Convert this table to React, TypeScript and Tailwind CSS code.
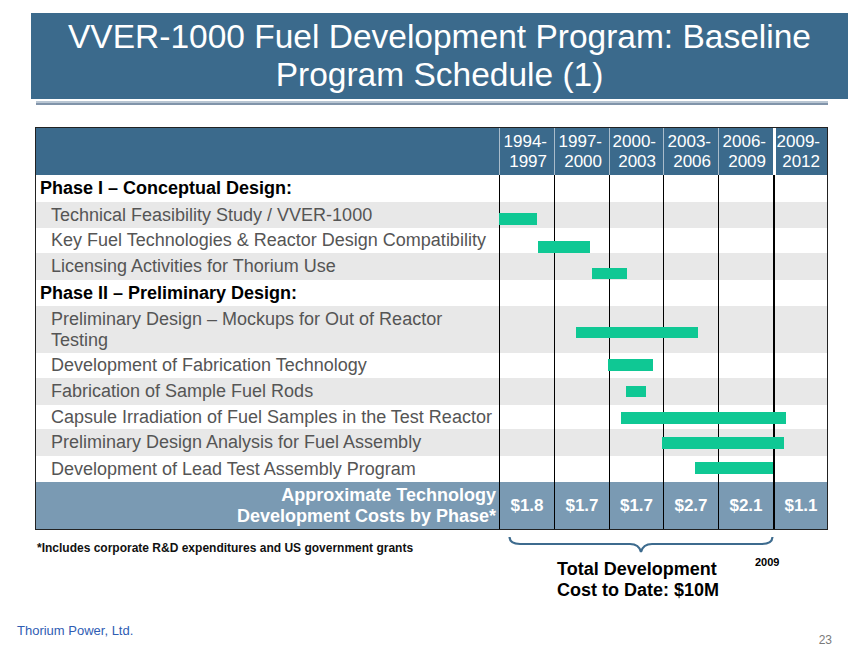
import React from 'react';

type Row = {
  label: string;
  h: number;
  phase?: boolean;
  gray?: boolean;
  bar?: [number, number, number, number]; // x1, x2 (page px), top in row, height
};

// timeline starts at x=499 on the page
const T0 = 499;

const rows: Row[] = [
  { label: 'Phase I – Conceptual Design:', h: 27, phase: true },
  { label: 'Technical Feasibility Study / VVER-1000', h: 26, gray: true, bar: [499, 537, 11, 12] },
  { label: 'Key Fuel Technologies & Reactor Design Compatibility', h: 25, bar: [538, 590, 13, 12] },
  { label: 'Licensing Activities for Thorium Use', h: 27, gray: true, bar: [592, 627, 15, 11] },
  { label: 'Phase II – Preliminary Design:', h: 26, phase: true },
  { label: 'Preliminary Design – Mockups for Out of Reactor\nTesting', h: 47, gray: true, bar: [576, 698, 21, 11] },
  { label: 'Development of Fabrication Technology', h: 25, bar: [608, 653, 6, 12] },
  { label: 'Fabrication of Sample Fuel Rods', h: 27, gray: true, bar: [626, 646, 8, 11] },
  { label: 'Capsule Irradiation of Fuel Samples in the Test Reactor', h: 24, bar: [621, 786, 7, 12] },
  { label: 'Preliminary Design Analysis for Fuel Assembly', h: 27, gray: true, bar: [662, 784, 8, 12] },
  { label: 'Development of Lead Test Assembly Program', h: 26, bar: [695, 773, 6, 12] },
];

const periods = [
  ['1994-', '1997'],
  ['1997-', '2000'],
  ['2000-', '2003'],
  ['2003-', '2006'],
  ['2006-', '2009'],
  ['2009-', '2012'],
];

const costs = ['$1.8', '$1.7', '$1.7', '$2.7', '$2.1', '$1.1'];

const colW = ['w-[55px]', 'w-[55px]', 'w-[54px]', 'w-[55px]', 'w-[55px]', 'w-[54px]'];

const Columns = () => (
  <>
    {colW.map((w, i) => (
      <div key={i} className={`${w} h-full ${i === 5 ? 'border-l-2' : 'border-l'} border-black`} />
    ))}
  </>
);

const Brace = () => (
  <svg width="266" height="18" viewBox="0 0 266 18" className="block">
    <path
      d="M1.5 1 Q2 8 12 8 L122 8 Q131 8 133 16 Q135 8 144 8 L254 8 Q264 8 264.5 1"
      fill="none"
      stroke="#3d6b8e"
      strokeWidth="2.2"
    />
  </svg>
);

export default function App() {
  return (
    <div className="w-[859px] h-[662px] bg-white overflow-hidden font-['Liberation_Sans',Arial,sans-serif]">
      {/* title */}
      <div className="ml-[31px] mt-[13px] w-[817px] h-[86px] bg-[#3b6a8c] pt-[5px] text-center text-white text-[33.5px] leading-[38px]">
        <div>VVER-1000 Fuel Development Program: Baseline</div>
        <div>Program Schedule (1)</div>
      </div>
      <div className="ml-[36px] w-[792px] mt-[2px] h-[2px] bg-[#b9c6d3]" />
      <div className="ml-[36px] w-[792px] h-[2px] bg-[#8194aa]" />

      {/* schedule table */}
      <div className="ml-[35px] mt-[22px] w-[793px] border border-[#222]">
        {/* header */}
        <div className="flex h-[47px] bg-[#3b6a8c] text-white text-[17px] leading-[20px]">
          <div className="w-[463px]" />
          {periods.map((p, i) => (
            <div
              key={i}
              className={`${colW[i]} ${i === 5 ? 'border-l-[3px] border-white' : 'border-l border-[#a9bccb]'} flex flex-col items-end justify-center pr-[7px]`}
            >
              <span>{p[0]}</span>
              <span>{p[1]}</span>
            </div>
          ))}
        </div>

        {/* body */}
        {rows.map((r, i) => (
          <div key={i} className={`flex ${r.gray ? 'bg-[#e8e8e8]' : 'bg-white'}`} style={{ height: r.h }}>
            <div
              className={`w-[463px] flex items-center whitespace-pre text-[18px] leading-[21px] ${
                r.phase ? 'pl-[4px] font-bold text-black' : 'pl-[15px] text-[#555]'
              }`}
            >
              {r.label}
            </div>
            <div className="relative flex h-full">
              <Columns />
              {r.bar && (
                <div
                  className="absolute z-10 bg-[#0fc894]"
                  style={{
                    left: r.bar[0] - T0,
                    width: r.bar[1] - r.bar[0],
                    top: r.bar[2],
                    height: r.bar[3],
                  }}
                />
              )}
            </div>
          </div>
        ))}

        {/* cost row */}
        <div className="flex h-[47px] bg-[#7a9ab3] text-white font-bold">
          <div className="w-[463px] flex flex-col items-end justify-center pr-[3px] text-[18px] leading-[21px] whitespace-nowrap">
            <span>Approximate Technology</span>
            <span>Development Costs by Phase*</span>
          </div>
          {costs.map((c, i) => (
            <div
              key={i}
              className={`${colW[i]} ${i === 5 ? 'border-l-2' : 'border-l'} border-black flex items-center justify-center text-[17px]`}
            >
              {c}
            </div>
          ))}
        </div>
      </div>

      {/* below table */}
      <div className="flex mt-[6px]">
        <div className="w-[508px] pl-[37px] pt-[5px] text-[12px] font-bold text-[#111] leading-[14px] whitespace-nowrap">
          *Includes corporate R&amp;D expenditures and US government grants
        </div>
        <div className="w-[266px] flex flex-col">
          <Brace />
          <div className="pl-[49px] pt-[5px] text-[18px] font-bold leading-[21px] text-black">
            <div>Total Development</div>
            <div>Cost to Date: $10M</div>
          </div>
        </div>
        <div className="-ml-[19px] pt-[20px] text-[11px] font-bold leading-[13px] text-black">2009</div>
      </div>

      {/* footer */}
      <div className="flex justify-between mt-[23px] pl-[17px] pr-[27px]">
        <div className="text-[13px] text-[#2f5db3] leading-[14px]">Thorium Power, Ltd.</div>
        <div className="pt-[9px] text-[12px] text-[#7a7a7a] leading-[14px]">23</div>
      </div>
    </div>
  );
}
